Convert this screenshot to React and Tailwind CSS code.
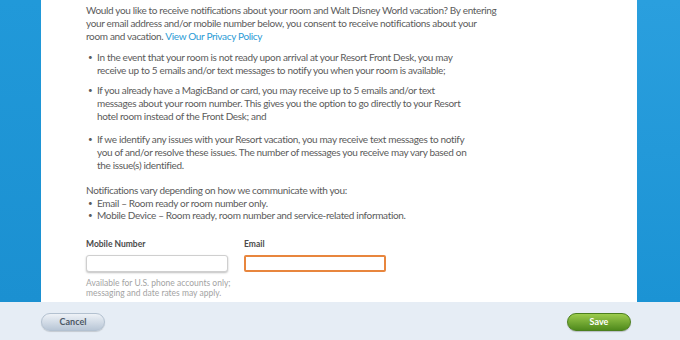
import React from 'react';

function Bullet({ children, className = '' }) {
    return (
        <li className={`flex ${className}`}>
            <span className="w-[11px] shrink-0 pl-[2px] text-[8px]">•</span>
            <span>{children}</span>
        </li>
    );
}

export default function App() {
    return (
        <div className="w-[680px] h-[340px] flex flex-col overflow-hidden font-['Lato',sans-serif]">
            <div className="flex h-[302px]">
                <div className="w-[41px] bg-gradient-to-b from-[#2199d9] to-[#1b90d1]" />

                <div className="flex-1 bg-white pl-[45px] pt-[4px] text-[10px] tracking-[-0.33px] leading-[13px] text-[#5b5b5b] whitespace-nowrap">
                    <p>
                        Would you like to receive notifications about your room and Walt Disney World vacation? By entering
                        <br />
                        your email address and/or mobile number below, you consent to receive notifications about your
                        <br />
                        room and vacation. <a className="text-[#2a9ad5]">View Our Privacy Policy</a>
                    </p>

                    <ul className="mt-[8px]">
                        <Bullet>
                            In the event that your room is not ready upon arrival at your Resort Front Desk, you may
                            <br />
                            receive up to 5 emails and/or text messages to notify you when your room is available;
                        </Bullet>
                        <Bullet className="mt-[7px]">
                            If you already have a MagicBand or card, you may receive up to 5 emails and/or text
                            <br />
                            messages about your room number. This gives you the option to go directly to your Resort
                            <br />
                            hotel room instead of the Front Desk; and
                        </Bullet>
                        <Bullet className="mt-[10px]">
                            If we identify any issues with your Resort vacation, you may receive text messages to notify
                            <br />
                            you of and/or resolve these issues. The number of messages you receive may vary based on
                            <br />
                            the issue(s) identified.
                        </Bullet>
                    </ul>

                    <p className="mt-[12px]">Notifications vary depending on how we communicate with you:</p>
                    <ul className="leading-[12px]">
                        <Bullet>Email – Room ready or room number only.</Bullet>
                        <Bullet>Mobile Device – Room ready, room number and service-related information.</Bullet>
                    </ul>

                    <div className="flex gap-[16px] mt-[18px] tracking-normal">
                        <div className="w-[142px]">
                            <label className="block text-[8.5px] leading-[11px] font-bold text-[#4a4a4a]">Mobile Number</label>
                            <div className="mt-[5px] h-[17px] rounded-[3px] border border-[#cfcfcf] bg-white shadow-[0_1px_2px_rgba(0,0,0,0.25)]" />
                            <p className="mt-[6px] text-[8.5px] leading-[10px] text-[#a3a3a3]">
                                Available for U.S. phone accounts only;
                                <br />
                                messaging and date rates may apply.
                            </p>
                        </div>
                        <div className="w-[142px]">
                            <label className="block text-[8.5px] leading-[11px] font-bold text-[#4a4a4a]">Email</label>
                            <div className="mt-[5px] h-[17px] rounded-[2px] border-2 border-[#e8863e] bg-white" />
                        </div>
                    </div>
                </div>

                <div className="w-[43px] bg-gradient-to-b from-[#2a9fde] to-[#1b93d4]" />
            </div>

            <div className="flex-1 bg-[#e6edf5] flex items-start justify-between pt-[11px] pl-[41px] pr-[49px]">
                <button className="w-[64px] h-[18px] rounded-full bg-gradient-to-b from-[#eef2f7] to-[#b8c6d6] border border-[#b3c1d0] text-[9px] font-bold text-[#4c5866] shadow-[0_1px_1px_rgba(0,0,0,0.15)]">
                    Cancel
                </button>
                <button className="w-[64px] h-[18px] rounded-full bg-gradient-to-b from-[#9ccc4c] to-[#4f8a1c] border border-[#4c7f1e] text-[9px] font-bold text-white shadow-[0_1px_1px_rgba(0,0,0,0.2)]">
                    Save
                </button>
            </div>
        </div>
    );
}
